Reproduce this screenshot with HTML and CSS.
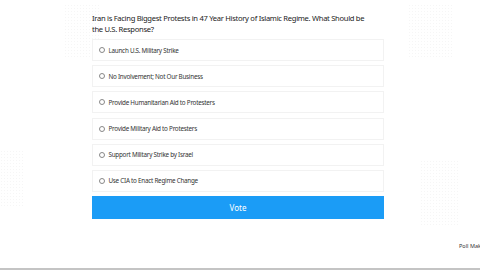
FILE: index.html
```html
<!DOCTYPE html>
<html lang="en">
<head>
  <meta charset="UTF-8" />
  <meta name="viewport" content="width=device-width, initial-scale=1.0"/>
  <title>Poll</title>
  <link rel="stylesheet" href="styles.css">
</head>
<body>
  <div class="page">
    <div class="dots dots-a"></div>
    <div class="dots dots-b"></div>
    <div class="dots dots-c"></div>
    <div class="dots dots-d"></div>

    <div class="poll">
      <h1 class="question">Iran is Facing Biggest Protests in 47 Year History of Islamic Regime. What Should be the U.S. Response?</h1>

      <div class="options">
        <label class="option"><span class="radio"></span>Launch U.S. Military Strike</label>
        <label class="option"><span class="radio"></span>No Involvement; Not Our Business</label>
        <label class="option"><span class="radio"></span>Provide Humanitarian Aid to Protesters</label>
        <label class="option"><span class="radio"></span>Provide Military Aid to Protesters</label>
        <label class="option"><span class="radio"></span>Support Military Strike by Israel</label>
        <label class="option"><span class="radio"></span>Use CIA to Enact Regime Change</label>
      </div>

      <button class="vote-btn">Vote</button>
    </div>

    <div class="footer">Poll Maker</div>
  </div>
</body>
</html>
```

FILE: styles.css
```css
* {
  box-sizing: border-box;
  font-family: "Noto Sans", "Open Sans", sans-serif;
}

body {
  margin: 0;
  background: #ffffff;
  overflow: hidden;
}

.page {
  position: relative;
  height: 270px;
  border-bottom: 2px solid #c4c4c4;
}

/* faint dotted patches behind the poll */
.dots {
  position: absolute;
  background-image: radial-gradient(#ececec 0.6px, transparent 0.9px);
  background-size: 3px 3px;
  opacity: 0.5;
}

.dots-a { left: 64px; top: 4px; width: 36px; height: 54px; }
.dots-b { left: 408px; top: 4px; width: 46px; height: 54px; }
.dots-c { left: 0; top: 150px; width: 24px; height: 58px; }
.dots-d { left: 420px; top: 160px; width: 40px; height: 66px; }

.poll {
  position: relative;
  width: 292px;
  margin-left: 92px;
  padding-top: 13px;
}

.question {
  margin: 0 0 4px;
  padding-right: 12px;
  font-size: 7.6px;
  letter-spacing: -0.3px;
  line-height: 11px;
  font-weight: normal;
  color: #222;
}

.options {
  display: flex;
  flex-direction: column;
  gap: 4.2px;
}

.option {
  display: flex;
  align-items: center;
  gap: 3.5px;
  height: 22px;
  padding-left: 6px;
  border: 1px solid #f2f2f2;
  font-size: 6.3px;
  letter-spacing: -0.25px;
  color: #333;
  background: #fff;
}

.radio {
  width: 6px;
  height: 6px;
  border: 1px solid #888;
  border-radius: 50%;
}

.vote-btn {
  display: block;
  width: 100%;
  height: 23px;
  margin-top: 4px;
  border: none;
  background-color: #1b9cf6;
  color: #ffffff;
  font-size: 8px;
  cursor: pointer;
}

.footer {
  position: absolute;
  left: 459px;
  top: 242px;
  font-size: 5.5px;
  color: #333;
  white-space: nowrap;
}
```
